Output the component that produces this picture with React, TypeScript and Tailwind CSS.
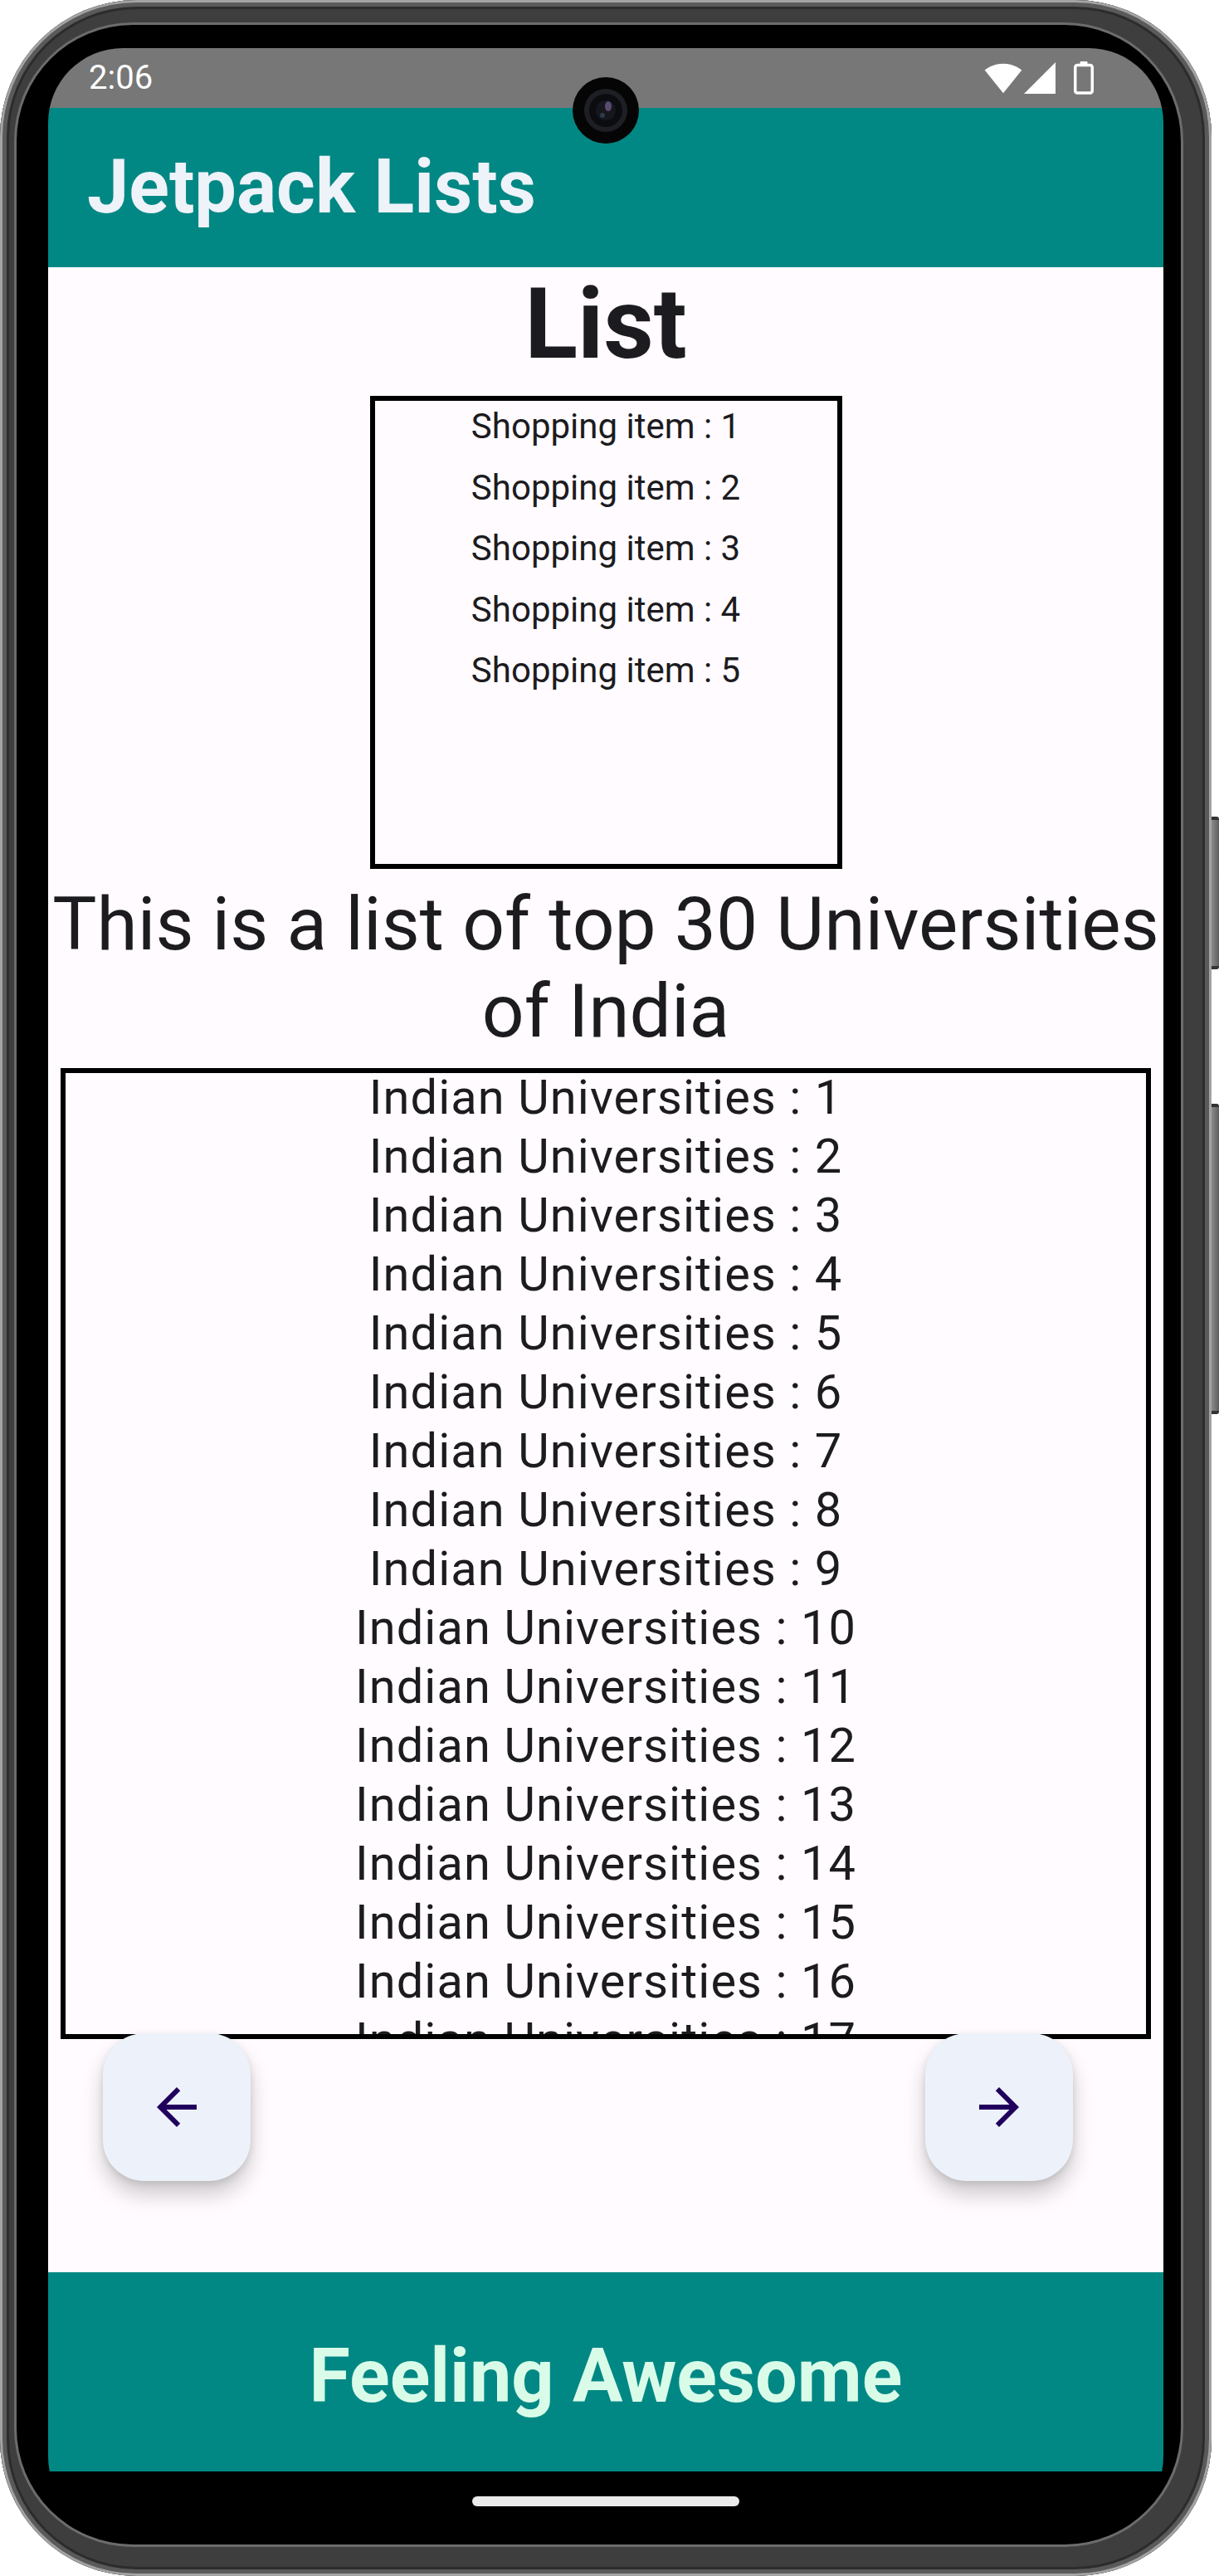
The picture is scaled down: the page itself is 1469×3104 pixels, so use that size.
import React from "react";

function ArrowBack() {
  return (
    <svg width="72" height="72" viewBox="0 0 24 24" fill="#21005D">
      <path d="M20 11H7.83l5.59-5.59L12 4l-8 8 8 8 1.41-1.41L7.83 13H20v-2z" />
    </svg>
  );
}

function ArrowForward() {
  return (
    <svg width="72" height="72" viewBox="0 0 24 24" fill="#21005D">
      <path d="M12 4l-1.41 1.41L16.17 11H4v2h12.17l-5.58 5.59L12 20l8-8z" />
    </svg>
  );
}

function Wifi() {
  return (
    <svg width="46" height="46" viewBox="0 0 24 24" fill="#ffffff">
      <path d="M12.01 21.49L23.64 7c-.45-.34-4.93-4-11.64-4C5.28 3 .81 6.66.36 7l11.63 14.49.01.01.01-.01z" />
    </svg>
  );
}

function Signal() {
  return (
    <svg width="38" height="38" viewBox="0 0 20 20" fill="#ffffff">
      <path d="M0 20h20V0z" />
    </svg>
  );
}

function Battery() {
  return (
    <svg width="24" height="40" viewBox="0 0 24 40" fill="none">
      <rect x="7.5" y="0" width="9" height="5" rx="1" fill="#ffffff" />
      <rect x="1.75" y="4.5" width="20.5" height="33.5" rx="2.5" stroke="#ffffff" strokeWidth="3.5" />
    </svg>
  );
}

function Camera() {
  return (
    <svg width="80" height="80" viewBox="0 0 80 80">
      <circle cx="40" cy="40" r="40" fill="#050505" />
      <circle cx="40" cy="40" r="26" fill="#1d1f24" />
      <circle cx="40" cy="40" r="20" fill="#0b0c10" />
      <circle cx="40" cy="40" r="12" fill="#15171d" />
      <ellipse cx="43" cy="35" rx="4" ry="6" fill="#6b5a86" opacity="0.8" />
      <circle cx="36" cy="46" r="3" fill="#2c3a4a" />
    </svg>
  );
}

export default function App() {
  const shopping = [1, 2, 3, 4, 5];
  const unis = Array.from({ length: 30 }, (_, i) => i + 1);
  return (
    <div className="w-[1469px] h-[3104px] bg-white flex overflow-hidden font-[Roboto,'Liberation_Sans',sans-serif]">
      {/* phone body */}
      <div className="w-[1460px] h-[3104px] shrink-0 rounded-[165px] bg-[#3e3e3e] shadow-[inset_0_0_0_3px_#a3a3a3,inset_0_0_0_8px_#5a5a5a,inset_0_0_0_11px_#2c2c2c] pt-[30px] pl-[20px] pr-[37px] pb-[38px]">
        <div className="w-[1403px] h-[3036px] rounded-[140px] bg-black shadow-[0_0_0_3px_#6c6c6c] pt-[28px] pl-[38px] pr-[21px] pb-[16px]">
          {/* screen */}
          <div className="relative w-[1344px] h-[2992px] rounded-[90px] overflow-hidden bg-black flex flex-col">
            {/* status bar */}
            <div className="h-[72px] shrink-0 bg-[#777777] flex items-center justify-between pl-[49px] pr-[84px]">
              <span className="text-[40px] leading-none text-white">2:06</span>
              <div className="flex items-center">
                <Wifi />
                <div className="ml-[2px]">
                  <Signal />
                </div>
                <div className="ml-[22px]">
                  <Battery />
                </div>
              </div>
            </div>
            {/* top app bar */}
            <div className="h-[192px] shrink-0 bg-[#028884] flex items-center pl-[47px]">
              <span className="text-[90px] leading-[1.17] font-bold text-[#EEF2F9]">Jetpack Lists</span>
            </div>
            {/* content */}
            <div className="h-[2416px] shrink-0 bg-[#FFFBFE] flex flex-col items-center text-[#1C1B1F]">
              <div className="text-[118px] leading-[138px] font-bold">List</div>
              <div className="mt-[17px] w-[569px] h-[570px] shrink-0 overflow-hidden outline-solid outline-[6px] outline-black -outline-offset-[6px] flex flex-col items-center pt-[5px] gap-[10.5px]">
                {shopping.map((n) => (
                  <div key={n} className="text-[42px] leading-[63px] whitespace-nowrap">
                    Shopping item : {n}
                  </div>
                ))}
              </div>
              <div className="mt-[14px] w-full flex flex-col items-center text-[89.3px] leading-[105px]">
                <div className="whitespace-nowrap">This is a list of top 30 Universities</div>
                <div className="whitespace-nowrap">of India</div>
              </div>
              <div className="mt-[16px] w-[1314px] h-[1170px] shrink-0 overflow-hidden outline-solid outline-[6px] outline-black -outline-offset-[6px] flex flex-col items-center">
                {unis.map((n) => (
                  <div key={n} className="shrink-0 text-[57.75px] leading-[71px] tracking-[1.1px] whitespace-nowrap">
                    Indian Universities : {n}
                  </div>
                ))}
              </div>
              <div className="relative z-10 -mt-[7px] w-full flex justify-between pl-[66px] pr-[109px]">
                <button className="w-[178px] h-[178px] rounded-[50px] bg-[#EDF2FA] flex items-center justify-center shadow-[0_16px_26px_rgba(0,0,0,0.2),0_3px_8px_rgba(0,0,0,0.1)]">
                  <ArrowBack />
                </button>
                <button className="w-[178px] h-[178px] rounded-[50px] bg-[#EDF2FA] flex items-center justify-center shadow-[0_16px_26px_rgba(0,0,0,0.2),0_3px_8px_rgba(0,0,0,0.1)]">
                  <ArrowForward />
                </button>
              </div>
            </div>
            {/* bottom bar */}
            <div className="h-[240px] shrink-0 bg-[#028884] flex items-center justify-center pt-[12px]">
              <span className="text-[90px] leading-[1.17] font-bold text-[#D9FCE9]">Feeling Awesome</span>
            </div>
            {/* nav bar */}
            <div className="h-[72px] shrink-0 bg-black flex items-center justify-center">
              <div className="w-[322px] h-[12px] rounded-full bg-[#EBEBEB]" />
            </div>
            {/* camera cutout */}
            <div className="absolute left-[632px] top-[35px]">
              <Camera />
            </div>
          </div>
        </div>
      </div>
      {/* side buttons */}
      <div className="w-[9px] flex flex-col">
        <div className="mt-[984px] h-[184px] rounded-r-[3px] bg-gradient-to-r from-[#8c8c8c] to-[#5e5e5e] border-y-[4px] border-[#333]" />
        <div className="mt-[162px] h-[374px] rounded-r-[3px] bg-gradient-to-r from-[#8c8c8c] to-[#5e5e5e] border-y-[4px] border-[#333]" />
      </div>
    </div>
  );
}
